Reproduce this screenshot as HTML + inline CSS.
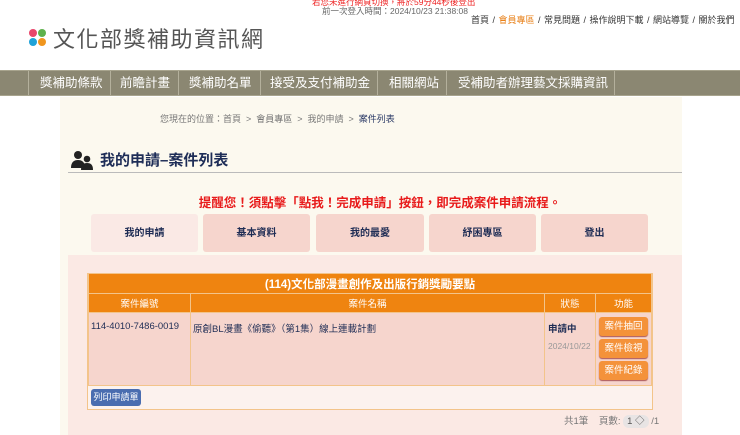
<!DOCTYPE html>
<html><head><meta charset="utf-8"><style>
*{margin:0;padding:0;box-sizing:border-box}
body{width:740px;height:435px;overflow:hidden;background:#fff;font-family:"Liberation Sans","Noto Sans CJK TC",sans-serif;position:relative}
.abs{position:absolute}
.nav{left:0;top:70px;width:740px;height:26px;background:#8b8772;border-top:1px solid #a8a48e;border-bottom:1px solid #a8a48e}
.nav span{position:absolute;top:0;height:24px;line-height:24px;color:#fff;font-size:12.5px;white-space:nowrap}
.nav i{position:absolute;top:0;width:1px;height:24px;background:#b4b09c}
.tab{top:214px;height:38px;background:#f6d5cd;border-radius:3px;font-size:10px;font-weight:bold;color:#1f2d55;text-align:center;line-height:40px}
td,th{border:1px solid #f3c48a}
</style></head><body>
<div class="abs" style="left:312px;top:-3px;font-size:8.5px;color:#e22;line-height:10px;white-space:nowrap">若您未進行網頁切換，將於59分44秒後登出</div>
<div class="abs" style="left:300px;top:6px;width:168px;text-align:right;font-size:8.5px;color:#666;line-height:10px;white-space:nowrap;background:#fff">前一次登入時間：2024/10/23 21:38:08</div>
<div class="abs" style="left:471px;top:13px;font-size:9px;color:#333;white-space:nowrap;word-spacing:1px">首頁 / <span style="color:#e8811a">會員專區</span> / 常見問題 / 操作說明下載 / 網站導覽 / 關於我們</div>
<div class="abs" style="left:29px;top:29px;width:8px;height:8px;border-radius:50%;background:#e8456a"></div>
<div class="abs" style="left:38px;top:29px;width:8px;height:8px;border-radius:50%;background:#5db14c"></div>
<div class="abs" style="left:29px;top:38px;width:8px;height:8px;border-radius:50%;background:#1ea2d8"></div>
<div class="abs" style="left:38px;top:38px;width:8px;height:8px;border-radius:50%;background:#f0961e"></div>
<div class="abs" style="left:53px;top:22px;font-size:22px;color:#555;letter-spacing:1.5px">文化部獎補助資訊網</div>
<div class="abs nav">
<i style="left:28px"></i><i style="left:110px"></i><i style="left:178px"></i><i style="left:260px"></i><i style="left:377px"></i><i style="left:446px"></i><i style="left:614px"></i>
<span style="left:40px">獎補助條款</span><span style="left:120px">前瞻計畫</span><span style="left:189px">獎補助名單</span><span style="left:270px">接受及支付補助金</span><span style="left:389px">相關網站</span><span style="left:458px">受補助者辦理藝文採購資訊</span>
</div>
<div class="abs" style="left:60px;top:97px;width:622px;height:338px;background:#fcf9ef"></div>
<div class="abs" style="left:160px;top:112px;font-size:9px;color:#777;white-space:nowrap">您現在的位置：首頁 &nbsp;&gt;&nbsp; 會員專區 &nbsp;&gt;&nbsp; 我的申請 &nbsp;&gt;&nbsp; <b style="color:#2b3a66;font-weight:normal">案件列表</b></div>
<svg class="abs" style="left:70px;top:150px" width="24" height="20" viewBox="0 0 24 20"><circle cx="8" cy="5" r="4" fill="#222"/><path d="M1 18c0-6 3-8 7-8s7 2 7 8z" fill="#222"/><circle cx="17" cy="9" r="3.3" fill="#222"/><path d="M11 20c0-5 2-7 6-7s6 2 6 7z" fill="#222"/></svg>
<div class="abs" style="left:100px;top:149px;font-size:15px;font-weight:bold;color:#1e2d57">我的申請–案件列表</div>
<div class="abs" style="left:68px;top:172px;width:614px;height:1px;background:#bbb"></div>
<div class="abs" style="left:60px;top:192px;width:620px;text-align:center;font-size:12.5px;font-weight:bold;color:#e81b1b;padding-left:20px">提醒您！須點擊「點我！完成申請」按鈕，即完成案件申請流程。</div>
<div class="abs tab" style="left:91px;width:107px;background:#fae9e5">我的申請</div>
<div class="abs tab" style="left:203px;width:107px">基本資料</div>
<div class="abs tab" style="left:316px;width:108px">我的最愛</div>
<div class="abs tab" style="left:429px;width:107px">紓困專區</div>
<div class="abs tab" style="left:541px;width:107px">登出</div>
<div class="abs" style="left:68px;top:255px;width:614px;height:180px;background:#fbe9e4"></div>
<div class="abs" style="left:87px;top:273px;width:566px;height:137px;border:1px solid #f3c48a;background:#fcf2ee"></div>
<table class="abs" style="left:88px;top:273px;width:564px;border-collapse:collapse;font-size:9.5px">
<tr><th colspan="4" style="background:#ef8410;color:#fff;height:20px;font-size:11.5px;font-weight:bold">(114)文化部漫畫創作及出版行銷獎勵要點</th></tr>
<tr style="background:#ef8410;color:#fff;height:19px;font-weight:normal"><th style="width:102px;font-weight:normal">案件編號</th><th style="font-weight:normal">案件名稱</th><th style="width:51px;font-weight:normal">狀態</th><th style="width:56px;font-weight:normal">功能</th></tr>
<tr style="background:#f6d5cd;color:#1f2d55;height:73px;vertical-align:top"><td style="padding:8px 2px">114-4010-7486-0019</td><td style="padding:8px 2px">原創BL漫畫《偷聽》（第1集）線上連載計劃</td><td style="padding:8px 3px;font-weight:bold">申請中<div style="font-weight:normal;color:#999;font-size:8.5px;margin-top:6px">2024/10/22</div></td>
<td style="padding:4px 3px"><div style="background:#f4923a;color:#fff;border-radius:3px;height:19px;line-height:19px;text-align:center;margin-bottom:3px;box-shadow:0 1px 1px #a55">案件抽回</div><div style="background:#f4923a;color:#fff;border-radius:3px;height:19px;line-height:19px;text-align:center;margin-bottom:3px;box-shadow:0 1px 1px #a55">案件檢視</div><div style="background:#f4923a;color:#fff;border-radius:3px;height:19px;line-height:19px;text-align:center;box-shadow:0 1px 1px #a55">案件紀錄</div></td></tr>
</table>
<div class="abs" style="left:91px;top:389px;width:50px;height:17px;background:#4a6db0;color:#fff;border-radius:3px;font-size:9px;text-align:center;line-height:17px">列印申請單</div>
<div class="abs" style="left:564px;top:413px;font-size:9.5px;color:#777;white-space:nowrap">共1筆 &nbsp;&nbsp; 頁數: <span style="background:#e8e4e4;border-radius:6px;padding:1px 4px;color:#555">1 ◇</span> /1</div>
</body></html>
